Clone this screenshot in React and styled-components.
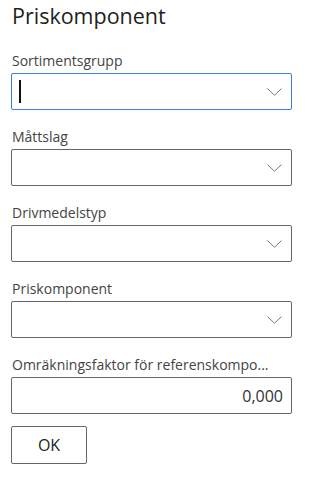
import React from "react";
import styled, { createGlobalStyle } from "styled-components";

const GlobalStyle = createGlobalStyle`
	html, body {
		margin: 0;
		padding: 0;
		background: #fff;
	}
	body {
		font-family: "Segoe UI", "Open Sans", "Noto Sans", sans-serif;
		color: #323130;
	}
`;

const Panel = styled.div`
	width: 313px;
	height: 478px;
	box-sizing: border-box;
	padding: 1px 21px 0 11px;
	display: flex;
	flex-direction: column;
`;

const Title = styled.h1`
	margin: 0 0 20px 1px;
	font-size: 21.5px;
	font-weight: 400;
	line-height: 30px;
	color: #201f1e;
`;

const Field = styled.div`
	display: flex;
	flex-direction: column;
	margin-bottom: 17px;
`;

const Label = styled.label`
	font-size: 14px;
	line-height: 20px;
	height: 20px;
	margin: 0 0 2px 1px;
	color: #444;
	white-space: nowrap;
`;

const Box = styled.div`
	position: relative;
	height: 37px;
	box-sizing: border-box;
	border: ${(p) => (p.$focused ? "1.5px solid #3b7de0" : "1px solid #666")};
	border-radius: 2px;
	display: flex;
	align-items: center;
	justify-content: ${(p) => (p.$number ? "flex-end" : "space-between")};
	padding: 0 8px 0 7px;
	font-size: 16px;
	color: #333;
`;

const Caret = styled.span`
	width: 1.5px;
	height: 23px;
	background: #111;
`;

const Chevron = styled.svg`
	margin-left: auto;
	margin-right: 1px;
	flex: none;
`;

const Button = styled.button`
	align-self: flex-start;
	width: 76px;
	height: 38px;
	margin-top: -5px;
	background: #fff;
	border: 1px solid #666;
	border-radius: 2px;
	font-family: inherit;
	font-size: 16px;
	color: #201f1e;
`;

const Arrow = () => (
	<Chevron width="15" height="8" viewBox="0 0 15 8">
		<path d="M0.5 0.6 L7.5 7.2 L14.5 0.6" fill="none" stroke="#777" strokeWidth="1" />
	</Chevron>
);

const fields = ["Måttslag", "Drivmedelstyp", "Priskomponent"];

export default function App() {
	return (
		<>
			<GlobalStyle />
			<Panel>
				<Title>Priskomponent</Title>
				<Field>
					<Label>Sortimentsgrupp</Label>
					<Box $focused>
						<Caret />
						<Arrow />
					</Box>
				</Field>
				{fields.map((f) => (
					<Field key={f}>
						<Label>{f}</Label>
						<Box>
							<Arrow />
						</Box>
					</Field>
				))}
				<Field>
					<Label>Omräkningsfaktor för referenskompo...</Label>
					<Box $number>0,000</Box>
				</Field>
				<Button>OK</Button>
			</Panel>
		</>
	);
}
